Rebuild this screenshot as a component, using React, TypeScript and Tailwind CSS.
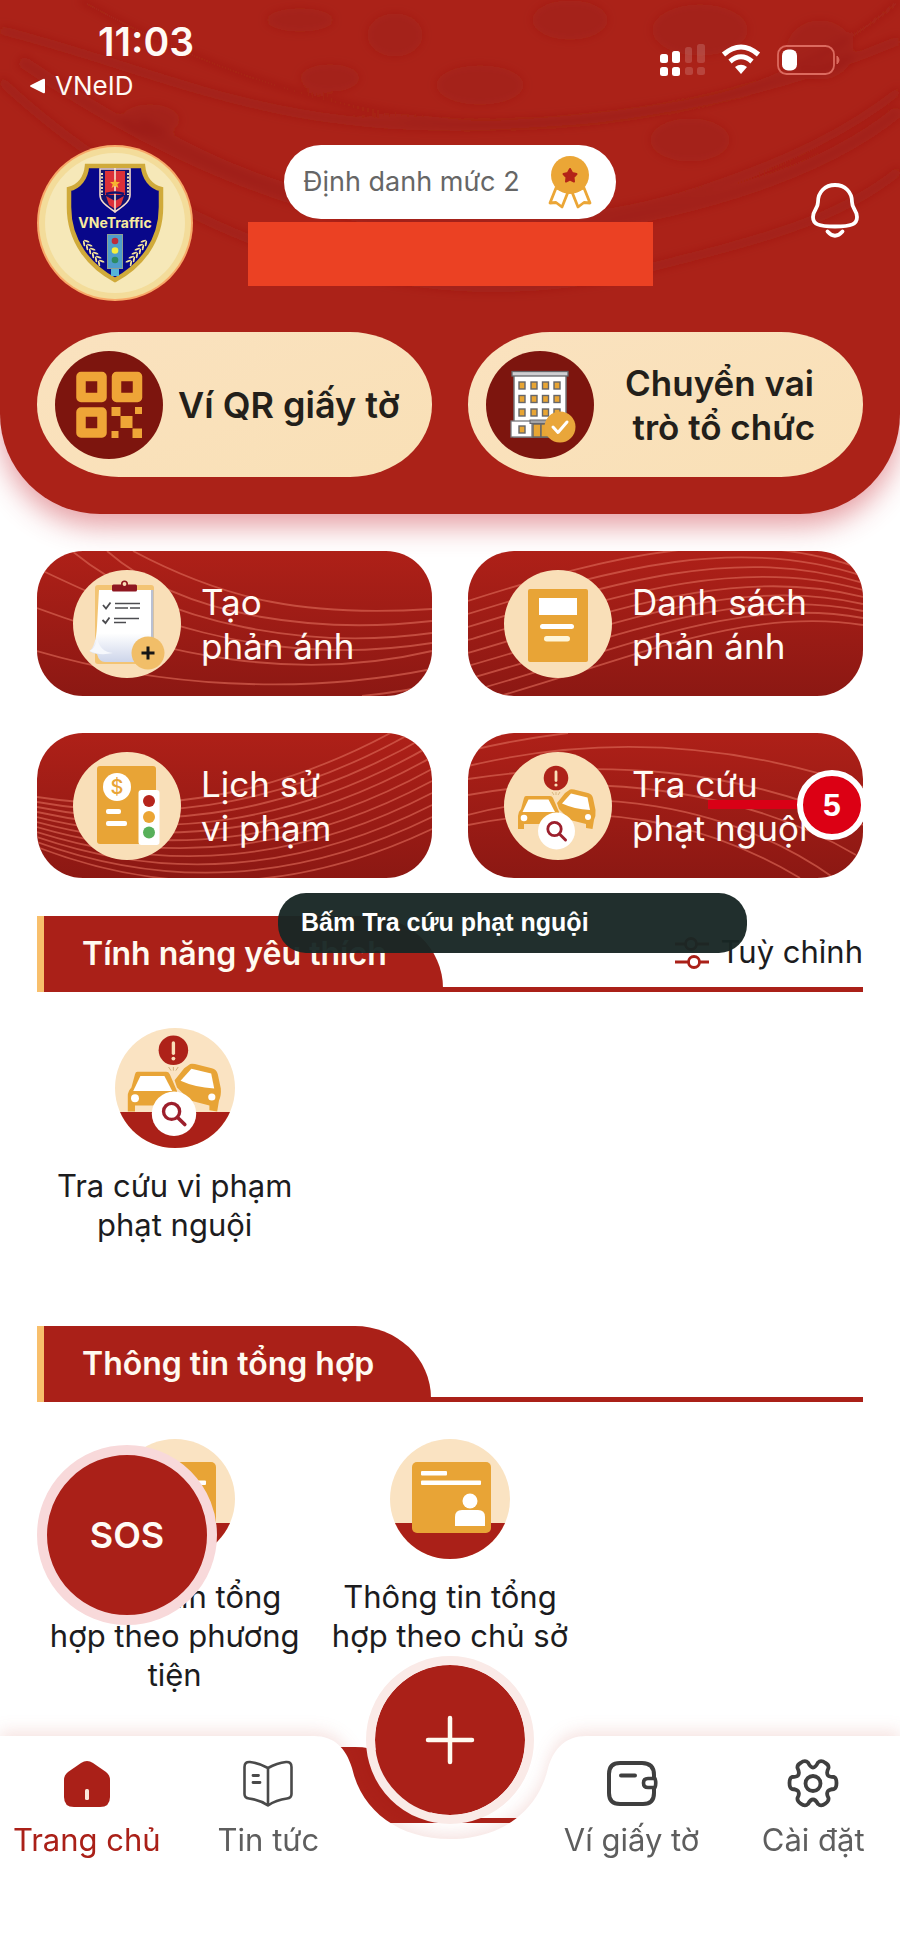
import type { ReactNode } from "react";

const wavesCreate = [
  "M96 0 C190 50 270 66 395 58",
  "M70 0 C150 70 290 82 395 70",
  "M35 0 C130 78 280 98 395 82",
  "M6 20 C90 60 220 120 395 92",
  "M0 57 C130 105 260 132 395 100",
  "M0 100 C120 135 260 145 395 118",
  "M325 145 Q370 140 395 134",
];

const wavesList = Array.from(
  { length: 9 },
  (_, i) => `M0 ${50 + 13 * i} C150 ${2 + 14 * i} 270 ${-26 + 10 * i} 395 ${18 + 7 * i}`,
);

const wavesHistory = Array.from(
  { length: 11 },
  (_, i) => `M0 ${64 + 5 * i} C130 ${84 + 8 * i} 260 ${60 + 10 * i} 395 ${-24 + 12 * i}`,
);

const wavesLookup = [
  "M0 18 Q50 6 100 0",
  "M0 33 C130 2 260 8 395 54",
  "M0 46 C130 26 270 34 395 92",
  "M0 62 C130 38 280 58 388 122",
  "M0 82 C120 50 260 70 366 145",
  "M0 92 C130 66 240 90 332 145",
];

function Waves({ paths }: { paths: string[] }) {
  return (
    <svg
      className="absolute inset-0 h-full w-full"
      viewBox="0 0 395 145"
      preserveAspectRatio="none"
      fill="none"
      stroke="#dd6a58"
      strokeOpacity="0.62"
      strokeWidth="1.8"
      aria-hidden="true"
    >
      {paths.map((d) => (
        <path key={d} d={d} />
      ))}
    </svg>
  );
}

function Laurel() {
  return (
    <g fill="#f3e39b">
      {[0, 1, 2, 3, 4, 5].map((i) => (
        <g key={i} transform={`translate(${49 + i * 3} ${98 + i * 4}) rotate(50)`}>
          <ellipse cx="0" cy="-2" rx="3" ry="1" transform="rotate(-30)" />
          <ellipse cx="0" cy="2" rx="3" ry="1" transform="rotate(30)" />
        </g>
      ))}
    </g>
  );
}

function Logo() {
  return (
    <svg viewBox="0 0 156 156" className="h-[156px] w-[156px] shrink-0" aria-label="VNeTraffic">
      <circle cx="78" cy="78" r="78" fill="#f8a868" />
      <circle cx="78" cy="78" r="76" fill="#f3dc9a" />
      <circle cx="78" cy="78" r="70" fill="#f6e8b8" />
      <path
        d="M50 21H106C107 33 114 42 124 44V62C124 96 104 121 78 135C52 121 32 96 32 62V44C42 42 49 33 50 21Z"
        fill="#08078a"
        stroke="#d0aa3a"
        strokeWidth="4.5"
      />
      <path d="M63 24H93V50C93 57 86 61 78 67C70 61 63 57 63 50Z" fill="#12126e" stroke="#f6dccb" strokeWidth="1.6" />
      <path d="M68 26H88V50H68Z" fill="#dc3038" />
      <path d="M69 51L78 56L87 51L84 60L78 64L72 60Z" fill="#dc3038" />
      <path d="M78 23V66" stroke="#f7e7d4" strokeWidth="1.6" />
      <path d="M78 34L79.5 37H83L80.3 39.4L81.5 43L78 41L74.5 43L75.7 39.4L73 37H76.5Z" fill="#f6b331" />
      <path d="M69 49Q78 46 87 49" stroke="#12126e" strokeWidth="2.5" fill="none" />
      <path d="M65 28V50M91 28V50" stroke="#e9dfb4" strokeWidth="2" strokeDasharray="2 1.5" />
      <text
        x="78"
        y="83"
        textAnchor="middle"
        fontFamily="Inter, sans-serif"
        fontWeight="700"
        fontSize="14"
        fill="#f7ea9f"
      >
        VNeTraffic
      </text>
      <rect x="74" y="122" width="8" height="9" fill="#55b4d8" />
      <rect x="70.5" y="89.5" width="15" height="34" fill="#4f9dcb" stroke="#8f9f92" />
      <circle cx="78" cy="96" r="3.3" fill="#bd2c3a" />
      <circle cx="78" cy="105.5" r="3.3" fill="#f4ef3f" />
      <circle cx="78" cy="115" r="3.3" fill="#2d8b62" />
      <Laurel />
      <g transform="matrix(-1 0 0 1 156 0)">
        <Laurel />
      </g>
    </svg>
  );
}

function Medal() {
  return (
    <svg viewBox="0 0 44 56" className="h-14 w-11" aria-hidden="true">
      <g fill="#fff" stroke="#eba636" strokeWidth="2.8" strokeLinejoin="round">
        <path d="M8 34L2 49L8 48.5L14 53L20 38Z" />
        <path d="M36 34L42 49L36 48.5L30 53L24 38Z" />
      </g>
      <circle cx="22" cy="21" r="19" fill="#eba636" />
      <path
        d="M22 15L24.2 19L28.5 20L25.5 23.2L26 27.5L22 25.7L18 27.5L18.5 23.2L15.5 20L19.8 19Z"
        fill="#b42318"
        stroke="#b42318"
        strokeWidth="2"
        strokeLinejoin="round"
      />
    </svg>
  );
}

function Bell() {
  return (
    <svg
      viewBox="0 0 48 58"
      className="h-[58px] w-12"
      fill="none"
      stroke="#fff"
      strokeWidth="3.8"
      strokeLinecap="round"
      aria-hidden="true"
    >
      <path d="M24 3C14 3 7 10 7 20C7 27 2 28 2 35C2 42 7 44.5 24 44.5S46 42 46 35C46 28 41 27 41 20C41 10 34 3 24 3Z" />
      <path d="M16.500 49.500Q24 58 31.500 49.500" />
    </svg>
  );
}

function StatusIcons() {
  return (
    <svg viewBox="0 0 184 36" className="h-9 w-[184px]" aria-hidden="true">
      <g fill="#fff">
        <rect x="1" y="12" width="8" height="9" rx="2.5" />
        <rect x="13" y="9" width="8" height="12" rx="2.5" />
        <rect x="1" y="25" width="8" height="9" rx="2.5" />
        <rect x="13" y="25" width="8" height="9" rx="2.5" />
      </g>
      <g fill="#fff" fillOpacity="0.16">
        <rect x="26" y="5" width="7" height="16" rx="2.5" />
        <rect x="38" y="2" width="8" height="19" rx="2.5" />
        <rect x="26" y="25" width="8" height="8" rx="2.5" />
        <rect x="38" y="25" width="8" height="8" rx="2.5" />
      </g>
      <g fill="none" stroke="#fff" strokeWidth="5">
        <path d="M64.5 12.5Q82 -2.5 99.5 12.5" />
        <path d="M71 19.5Q82 10 93 19.5" />
      </g>
      <path d="M76 25Q82 20.5 88 25L82 32Z" fill="#fff" />
      <rect x="119" y="4" width="56" height="28" rx="8.5" fill="none" stroke="#dc6a5f" strokeWidth="1.8" />
      <rect x="123" y="7.5" width="15" height="21" rx="6" fill="#fff" />
      <path d="M178 14Q182 18 178 22Z" fill="#dc6a5f" stroke="#dc6a5f" />
    </svg>
  );
}

function QrIcon() {
  return (
    <svg viewBox="0 0 108 108" className="h-[108px] w-[108px] shrink-0" aria-hidden="true">
      <circle cx="54" cy="54" r="54" fill="#7d150e" />
      <g fill="none" stroke="#efa537" strokeWidth="9.5" strokeLinejoin="round">
        <rect x="26" y="25.5" width="21" height="21" />
        <rect x="61.5" y="25.5" width="21" height="21" />
        <rect x="26" y="61" width="21" height="21" />
      </g>
      <g fill="#efa537">
        <rect x="56.5" y="56" width="9" height="9" />
        <rect x="80" y="56" width="7" height="7" />
        <rect x="65.5" y="65" width="12" height="12" />
        <rect x="56.5" y="80" width="7" height="7" />
        <rect x="77.5" y="77.5" width="9.5" height="9.5" />
      </g>
    </svg>
  );
}

function BuildingIcon() {
  return (
    <svg viewBox="0 0 108 108" className="h-[108px] w-[108px] shrink-0" aria-hidden="true">
      <circle cx="54" cy="54" r="54" fill="#7d150e" />
      <rect x="28" y="24" width="52" height="62" fill="#fff" stroke="#77777b" strokeWidth="1.5" />
      <rect x="26" y="20.5" width="56" height="4.5" fill="#cfcfd2" stroke="#66666a" strokeWidth="1.3" />
      <rect x="25" y="70" width="21" height="16" fill="#fff" stroke="#77777b" strokeWidth="1.3" />
      <g fill="#e8a534" stroke="#66666a" strokeWidth="1.4">
        {[31, 44.5, 58].map((y) =>
          [33, 45, 56.5, 68].map((x) => <rect key={`${x}-${y}`} x={x} y={y} width="6" height="7" />),
        )}
        <rect x="33" y="75" width="6" height="7" />
        <rect x="47" y="73" width="8" height="13" />
        <rect x="55" y="73" width="8" height="13" />
      </g>
      <rect x="44" y="69" width="26" height="3.5" fill="#a3a3a6" stroke="#66666a" />
      <circle cx="74" cy="76" r="15.5" fill="#e9a63a" />
      <path d="M67 76L72 81.5L81 71" fill="none" stroke="#fff" strokeWidth="3" strokeLinecap="round" strokeLinejoin="round" />
    </svg>
  );
}

function Disc({ children }: { children: ReactNode }) {
  return (
    <svg viewBox="0 0 108 108" className="relative h-[108px] w-[108px] shrink-0" aria-hidden="true">
      <circle cx="54" cy="54" r="54" fill="#f9dfb8" />
      {children}
    </svg>
  );
}

function ClipboardIcon() {
  return (
    <Disc>
      <defs>
        <linearGradient id="paper" x1="0" y1="0" x2="0" y2="1">
          <stop offset="0.6" stopColor="#fff" />
          <stop offset="1" stopColor="#cdd5ea" />
        </linearGradient>
      </defs>
      <rect x="22" y="15" width="59" height="79" rx="3" fill="#f3c473" />
      <path d="M75 20H80.5V92H75Z" fill="#b9c0d4" />
      <path d="M26 20H78V92H32Q26 92 24 84Q20 84 16.5 81Q23 76 24 56Z" fill="url(#paper)" />
      <path d="M16.5 81Q23 78 24 68Q27 82 40 83Q26 86 16.5 81Z" fill="#f6f8fc" />
      <rect x="39" y="14.5" width="25" height="7" rx="1.5" fill="#8f1720" />
      <circle cx="51.5" cy="14" r="2.7" fill="#f9dfb8" stroke="#8f1720" strokeWidth="1.6" />
      <g fill="none" stroke="#4c4c50" strokeWidth="1.8">
        <path d="M30 35L33 38.5L37.5 32.5M29.5 50L32.5 53L36.5 47.5" />
        <path d="M42 33.5H67M42 38H55M57 38H67M41 48.5H66M41 52.5H53" strokeWidth="1.5" />
      </g>
      <circle cx="75" cy="83" r="16.5" fill="#f1be68" />
      <path d="M68.5 83H81.5M75 76.5V89.5" stroke="#151515" strokeWidth="3" />
    </Disc>
  );
}

function DocumentIcon() {
  return (
    <Disc>
      <rect x="24" y="19" width="60" height="73" rx="2" fill="#e8a436" />
      <rect x="35" y="28" width="38" height="17" fill="#fff" />
      <rect x="36" y="54" width="34" height="5" rx="2.5" fill="#fff" />
      <rect x="40" y="66" width="26" height="5.5" rx="2.7" fill="#fff6d8" />
    </Disc>
  );
}

function HistoryIcon() {
  return (
    <Disc>
      <rect x="24" y="14" width="59" height="78" rx="3" fill="#e8a436" />
      <circle cx="44" cy="35" r="14" fill="#fff" />
      <text
        x="44"
        y="42"
        textAnchor="middle"
        fontFamily="Inter, sans-serif"
        fontWeight="500"
        fontSize="20"
        fill="#e8a436"
      >
        $
      </text>
      <rect x="33" y="57" width="15" height="5" rx="2" fill="#fff" />
      <rect x="33" y="69" width="21" height="5" rx="2" fill="#fff" />
      <rect x="65.5" y="38" width="21" height="55" rx="3" fill="#fff" />
      <circle cx="76" cy="49" r="6" fill="#b5241c" />
      <circle cx="76" cy="65" r="6" fill="#eba534" />
      <circle cx="76" cy="80.5" r="6" fill="#57b05a" />
    </Disc>
  );
}

function Cars() {
  return (
    <g>
      <circle cx="52" cy="26" r="12.3" fill="#ae2219" />
      <path d="M52 20V28.5" stroke="#f9dfb8" strokeWidth="2.8" strokeLinecap="round" />
      <circle cx="52" cy="33" r="1.6" fill="#f9dfb8" />
      <path d="M48 40L50 43M52 40V43M56 40L54 43" stroke="#c8a36a" strokeWidth="0.7" />
      <path
        d="M22 44H46Q48 44 49 46L55 60V72H20V77H14V64Q14 60 17 57L20 46Q20.5 44 22 44Z"
        fill="#e8a436"
      />
      <path d="M24.5 47.5H44.5L51 60H18.5Z" fill="#fff" />
      <circle cx="20" cy="66" r="3.3" fill="#fff" />
      <path
        d="M66 37.5Q67 37 70 37.5L84 41Q88 42 89 46L91.5 58Q92 64 90 68L88.5 77L82 76V72L66 68L55 57L53 51L61 41Z"
        fill="#e8a436"
      />
      <path d="M67 41.5L83.5 45.5L86 58Q70 57 58 51.5Z" fill="#fff" />
      <circle cx="84" cy="65" r="3" fill="#fff" />
      <circle cx="52.5" cy="79" r="18.5" fill="#fff" />
      <circle cx="50.5" cy="77" r="6.7" fill="none" stroke="#9c1f2c" strokeWidth="2.8" />
      <path d="M55.5 82L61.5 88" stroke="#9c1f2c" strokeWidth="3" strokeLinecap="round" />
    </g>
  );
}

function FeatureDisc({ id, children }: { id: string; children: ReactNode }) {
  return (
    <svg viewBox="0 0 120 120" className="h-[120px] w-[120px]" aria-hidden="true">
      <clipPath id={id}>
        <circle cx="60" cy="60" r="60" />
      </clipPath>
      <g clipPath={`url(#${id})`}>
        <rect width="120" height="120" fill="#fae3c2" />
        <rect y="84" width="120" height="36" fill="#aa2018" />
      </g>
      {children}
    </svg>
  );
}

function CardGlyph({ person }: { person: boolean }) {
  return (
    <g>
      <rect x="22" y="23" width="79" height="71" rx="5" fill="#e8a436" />
      <rect x="31" y="32" width="26" height="4.5" rx="1" fill="#fff" />
      <rect x="31" y="41.5" width="60" height="4.5" rx="1" fill="#fff" />
      {person && (
        <g fill="#fff">
          <circle cx="80" cy="62" r="7.5" />
          <path d="M65 87V78Q65 71 72 71H88Q95 71 95 78V87Z" />
        </g>
      )}
    </g>
  );
}

function PrimaryCard({ icon, children }: { icon: ReactNode; children: ReactNode }) {
  return (
    <button
      type="button"
      className="flex h-[145px] items-center rounded-[82px/72px] bg-[#fae2bc] bg-linear-to-br from-[#fae2bf] to-[#f9e0b6] pl-[18px] text-[35px] leading-[44px] font-semibold text-[#231f1a]"
    >
      {icon}
      {children}
    </button>
  );
}

function ActionCard({
  icon,
  waves,
  title,
  children,
}: {
  icon: ReactNode;
  waves: string[];
  title: [string, string];
  children?: ReactNode;
}) {
  return (
    <button
      type="button"
      className="relative flex h-[145px] items-center gap-5 overflow-hidden rounded-[46px] bg-linear-to-b from-[#ae2018] to-[#8c1813] pl-9 text-left text-[35px] leading-[44px] text-[#fffaf5]"
    >
      <Waves paths={waves} />
      {icon}
      <span className="relative whitespace-nowrap">
        {title[0]}
        <br />
        {title[1]}
      </span>
      {children}
    </button>
  );
}

function SectionHeader({ title, action }: { title?: string; action?: ReactNode }) {
  return (
    <div className="flex h-[76px] items-stretch justify-between border-b-[5px] border-[#aa2018]">
      <div className="-mb-[5px] flex min-w-[394px] items-center rounded-tr-[76px_72px] border-l-[7px] border-[#f8bf6c] bg-[#aa2018] pr-14 pl-[38px]">
        {title && (
          <h2 className="text-[32px] leading-10 font-semibold whitespace-nowrap text-[#fffaf0]">{title}</h2>
        )}
      </div>
      {action}
    </div>
  );
}

function Feature({ icon, children }: { icon: ReactNode; children: ReactNode }) {
  return (
    <a href="#" className="flex flex-col items-center gap-[18px] text-center text-[31px] leading-[39px] text-[#1c1c1e]">
      {icon}
      <span>{children}</span>
    </a>
  );
}

function NavItem({ icon, label, active = false }: { icon: ReactNode; label: string; active?: boolean }) {
  return (
    <a
      href="#"
      className={
        active
          ? "flex flex-col items-center gap-2.5 text-[31px] leading-10 whitespace-nowrap text-[#aa2018]"
          : "flex flex-col items-center gap-2.5 text-[31px] leading-10 whitespace-nowrap text-[#5e5e5e]"
      }
    >
      {icon}
      {label}
    </a>
  );
}

function HomeIcon() {
  return (
    <svg viewBox="0 0 52 52" className="h-[52px] w-[52px]" aria-hidden="true">
      <path
        d="M20 5Q26 1 32 5L45 14Q49 17 49 22V39Q49 49 39 49H13Q3 49 3 39V22Q3 17 7 14Z"
        fill="#aa2018"
      />
      <rect x="24" y="31" width="4" height="11" rx="1.5" fill="#fbe7da" />
    </svg>
  );
}

function BookIcon() {
  return (
    <svg
      viewBox="0 0 52 52"
      className="h-[52px] w-[52px]"
      fill="none"
      stroke="#4a4a4a"
      strokeWidth="2.6"
      strokeLinecap="round"
      strokeLinejoin="round"
      aria-hidden="true"
    >
      <path d="M26 10Q17 5 8 4Q2.5 3.5 2.5 9V36Q2.5 40 7 40.5Q18 42 26 47.5Q34 42 45 40.5Q49.5 40 49.5 36V9Q49.5 3.5 44 4Q35 5 26 10ZM26 10V47.5" />
      <path d="M11 17.5H16.5M11 24.5H18" strokeWidth="2.8" />
    </svg>
  );
}

function WalletIcon() {
  return (
    <svg
      viewBox="0 0 52 52"
      className="h-[52px] w-[52px]"
      fill="none"
      stroke="#3f3f3f"
      strokeWidth="4"
      strokeLinecap="round"
      strokeLinejoin="round"
      aria-hidden="true"
    >
      <path d="M48 19V17Q48 5 36 5H14Q3 5 3 16V35Q3 46 14 46H37Q48 46 48 35V30" />
      <path d="M49 20.5H42Q37.5 20.5 37.5 25T42 29.5H49Q50.5 25 49 20.5Z" strokeWidth="3.6" />
      <path d="M15 17.5H29" />
    </svg>
  );
}

function GearIcon() {
  return (
    <svg
      viewBox="0 0 52 52"
      className="h-[52px] w-[52px]"
      fill="none"
      stroke="#3f3f3f"
      strokeWidth="3.8"
      strokeLinejoin="round"
      aria-hidden="true"
    >
      <path d="M21 4.5Q23.5 9.5 26 9.5T31 4.5Q34 1.5 38.5 5Q42 7 41.5 10Q39 15 41 17.5Q42.5 19 47 19Q49.5 20 49.5 25T47 31Q42.5 31.5 41 33Q39 36 41.5 40Q42 43 38.5 45.5Q34 49 31 46Q28.5 41.5 26 41.5T21 46Q18 49 13.5 45.5Q10 43 10.5 40Q13 36 11 33Q9.5 31.5 5 31Q2.5 30 2.5 25T5 19Q9.5 19 11 17.5Q13 15 10.5 10Q10 7 13.5 5Q18 1.5 21 4.5Z" />
      <circle cx="26" cy="25.5" r="7.5" />
    </svg>
  );
}

function BottomNav() {
  return (
    <nav className="fixed inset-x-0 bottom-0 overflow-x-clip">
      <div className="flex h-[212px] drop-shadow-[0_-5px_8px_rgba(190,60,40,0.14)]">
        <div className="min-w-0 flex-1 bg-white" />
        <svg viewBox="0 0 300 212" className="h-[212px] w-[300px] shrink-0" aria-hidden="true">
          <path
            d="M0 0H14C34 0 46 12 52 32C62 76 100 103 150 103C200 103 238 76 248 32C254 12 266 0 286 0H300V212H0Z"
            fill="#fff"
          />
        </svg>
        <div className="min-w-0 flex-1 bg-white" />
      </div>
      <div className="absolute -inset-x-1 top-[22px] grid grid-cols-5">
        <NavItem icon={<HomeIcon />} label="Trang chủ" active />
        <NavItem icon={<BookIcon />} label="Tin tức" />
        <div className="flex justify-center">
          <button
            type="button"
            aria-label="Thêm"
            className="-mt-[102px] flex h-[168px] w-[168px] shrink-0 items-center justify-center rounded-full border-[9px] border-[#faeae7] bg-[#aa2018] bg-clip-padding"
          >
            <svg viewBox="0 0 50 50" className="h-[50px] w-[50px]" stroke="#fffaf0" strokeWidth="4.5" strokeLinecap="round">
              <path d="M3 25H47M25 3V47" />
            </svg>
          </button>
        </div>
        <NavItem icon={<WalletIcon />} label="Ví giấy tờ" />
        <NavItem icon={<GearIcon />} label="Cài đặt" />
      </div>
    </nav>
  );
}

function HeaderPattern() {
  return (
    <svg
      className="absolute inset-x-0 top-0 h-[320px] w-full"
      viewBox="0 0 900 320"
      preserveAspectRatio="none"
      aria-hidden="true"
    >
      <defs>
        <filter id="soften" x="-10%" y="-10%" width="120%" height="120%">
          <feGaussianBlur stdDeviation="4" />
        </filter>
      </defs>
      <g filter="url(#soften)">
        <g fill="none" stroke="#8f1c16" strokeOpacity="0.34">
          <path d="M0 30C160 70 260 130 470 126C660 120 780 90 900 40" strokeWidth="9" />
          <path d="M80 0C240 90 420 140 600 120C720 105 820 70 900 0" strokeWidth="5" />
          <path d="M20 60C180 170 380 260 600 225C740 200 840 160 900 110" strokeWidth="12" />
          <path d="M0 80C160 230 400 330 640 270C760 240 840 220 900 170" strokeWidth="9" />
          <path d="M140 120C300 220 520 250 700 190C790 160 850 130 900 90" strokeWidth="8" />
        </g>
        <g fill="#8f1c16" fillOpacity="0.26">
          <ellipse cx="300" cy="20" rx="34" ry="12" />
          <ellipse cx="395" cy="35" rx="28" ry="22" />
          <ellipse cx="480" cy="85" rx="44" ry="20" />
          <ellipse cx="570" cy="20" rx="38" ry="20" />
          <ellipse cx="700" cy="30" rx="48" ry="26" />
          <ellipse cx="330" cy="78" rx="30" ry="14" />
          <ellipse cx="150" cy="120" rx="30" ry="16" />
          <ellipse cx="690" cy="140" rx="40" ry="22" />
          <ellipse cx="820" cy="50" rx="34" ry="30" />
        </g>
      </g>
    </svg>
  );
}

export default function App() {
  return (
    <div className="relative min-h-screen overflow-x-clip bg-white font-['Inter',sans-serif]">
      <header className="relative overflow-clip rounded-b-[100px] bg-[#ab2218] px-[37px] pt-6 pb-[37px] shadow-[0_12px_28px_rgba(200,40,50,0.45)]">
        <HeaderPattern />
        <div className="relative flex h-[121px] items-start justify-between pr-5">
          <div className="-ml-2 flex flex-col gap-2.5 text-[#fffaf5]">
            <time className="pl-[69px] text-[39px] leading-9 font-semibold">11:03</time>
            <a href="#" className="flex items-center gap-2.5 text-[26px] leading-8">
              <svg viewBox="0 0 16 16" className="h-4 w-4" fill="#fff" aria-hidden="true">
                <path d="M2 7L14 1Q16 0 16 2V14Q16 16 14 15L2 9Q0 8 2 7Z" />
              </svg>
              VNeID
            </a>
          </div>
          <div className="pt-[18px]">
            <StatusIcons />
          </div>
        </div>

        <div className="relative grid grid-cols-[1fr_auto_1fr] items-start">
          <Logo />
          <div className="flex flex-col items-center gap-[3px]">
            <div className="flex h-[74px] w-[332px] items-center justify-between rounded-full bg-white pr-6 pl-[19px]">
              <span className="text-[27px] leading-9 whitespace-nowrap text-[#666]">Định danh mức 2</span>
              <Medal />
            </div>
            <div className="h-16 w-[405px] bg-[#eb4123]" />
          </div>
          <button type="button" aria-label="Thông báo" className="mt-[37px] mr-1 justify-self-end">
            <Bell />
          </button>
        </div>

        <div className="relative mt-[31px] grid grid-cols-2 gap-9">
          <PrimaryCard icon={<QrIcon />}>
            <span className="pl-[15px] text-[36px] whitespace-nowrap">Ví QR giấy tờ</span>
          </PrimaryCard>
          <PrimaryCard icon={<BuildingIcon />}>
            <span className="flex-1 pr-[18px] text-center whitespace-nowrap">
              Chuyển vai
              <br />
              &nbsp;trò tổ chức
            </span>
          </PrimaryCard>
        </div>
      </header>

      <main className="relative px-[37px] pt-[37px]">
        <div className="grid grid-cols-2 gap-x-9 gap-y-[37px]">
          <ActionCard icon={<ClipboardIcon />} waves={wavesCreate} title={["Tạo", "phản ánh"]} />
          <ActionCard icon={<DocumentIcon />} waves={wavesList} title={["Danh sách", "phản ánh"]} />
          <ActionCard icon={<HistoryIcon />} waves={wavesHistory} title={["Lịch sử", "vi phạm"]} />
          <ActionCard
            icon={
              <Disc>
                <Cars />
              </Disc>
            }
            waves={wavesLookup}
            title={["Tra cứu", "phạt nguội"]}
          >
            <span className="absolute top-[67px] right-[60px] h-[9px] w-[95px] bg-[#d90016]" />
            <span className="absolute top-[37px] -right-1 flex h-[70px] w-[70px] items-center justify-center rounded-full border-[6px] border-white bg-[#dc0014] font-['Liberation_Sans',sans-serif] text-[32px] font-bold text-white">
              5
            </span>
          </ActionCard>
        </div>

        <section className="relative pt-[38px]">
          <SectionHeader
            title="Tính năng yêu thích"
            action={
              <button type="button" className="flex items-center gap-3 text-[31px] leading-10 text-[#1c1c1e]">
                <svg
                  viewBox="0 0 34 36"
                  className="h-9 w-[34px]"
                  fill="none"
                  stroke="#aa2018"
                  strokeWidth="2.8"
                  aria-hidden="true"
                >
                  <path d="M0 10H10M22 10H34M0 28H13M25 28H34" />
                  <circle cx="16" cy="10" r="5.5" />
                  <circle cx="19" cy="28" r="5.5" />
                </svg>
                Tuỳ chỉnh
              </button>
            }
          />
          <div
            role="status"
            className="absolute top-[15px] left-[241px] flex h-[60px] w-[469px] items-center rounded-[28px] bg-[#182724]/96 pl-[23px] font-['Liberation_Sans',sans-serif] text-[25px] font-bold text-white"
          >
            Bấm Tra cứu phạt nguội
          </div>
          <div className="grid grid-cols-3 pt-9">
            <Feature
              icon={
                <FeatureDisc id="disc-lookup">
                  <g transform="translate(-4 -9) scale(1.2)">
                    <Cars />
                  </g>
                </FeatureDisc>
              }
            >
              Tra cứu vi phạm
              <br />
              phạt nguội
            </Feature>
          </div>
        </section>

        <section className="relative pt-[82px]">
          <SectionHeader title="Thông tin tổng hợp" />
          <div className="grid grid-cols-3 pt-[37px]">
            <Feature
              icon={
                <FeatureDisc id="disc-vehicle">
                  <CardGlyph person={false} />
                </FeatureDisc>
              }
            >
              Thông tin tổng
              <br />
              hợp theo phương
              <br />
              tiện
            </Feature>
            <Feature
              icon={
                <FeatureDisc id="disc-owner">
                  <CardGlyph person />
                </FeatureDisc>
              }
            >
              Thông tin tổng
              <br />
              hợp theo chủ sở
            </Feature>
          </div>
          <button
            type="button"
            className="absolute top-[201px] left-0 flex h-[180px] w-[180px] items-center justify-center rounded-full border-[10px] border-[#f8d9da] bg-[#aa2018] text-[36px] font-semibold text-[#fffaf5]"
          >
            SOS
          </button>
        </section>

        <section className="pt-[53px]">
          <SectionHeader />
        </section>
      </main>

      <BottomNav />
    </div>
  );
}
